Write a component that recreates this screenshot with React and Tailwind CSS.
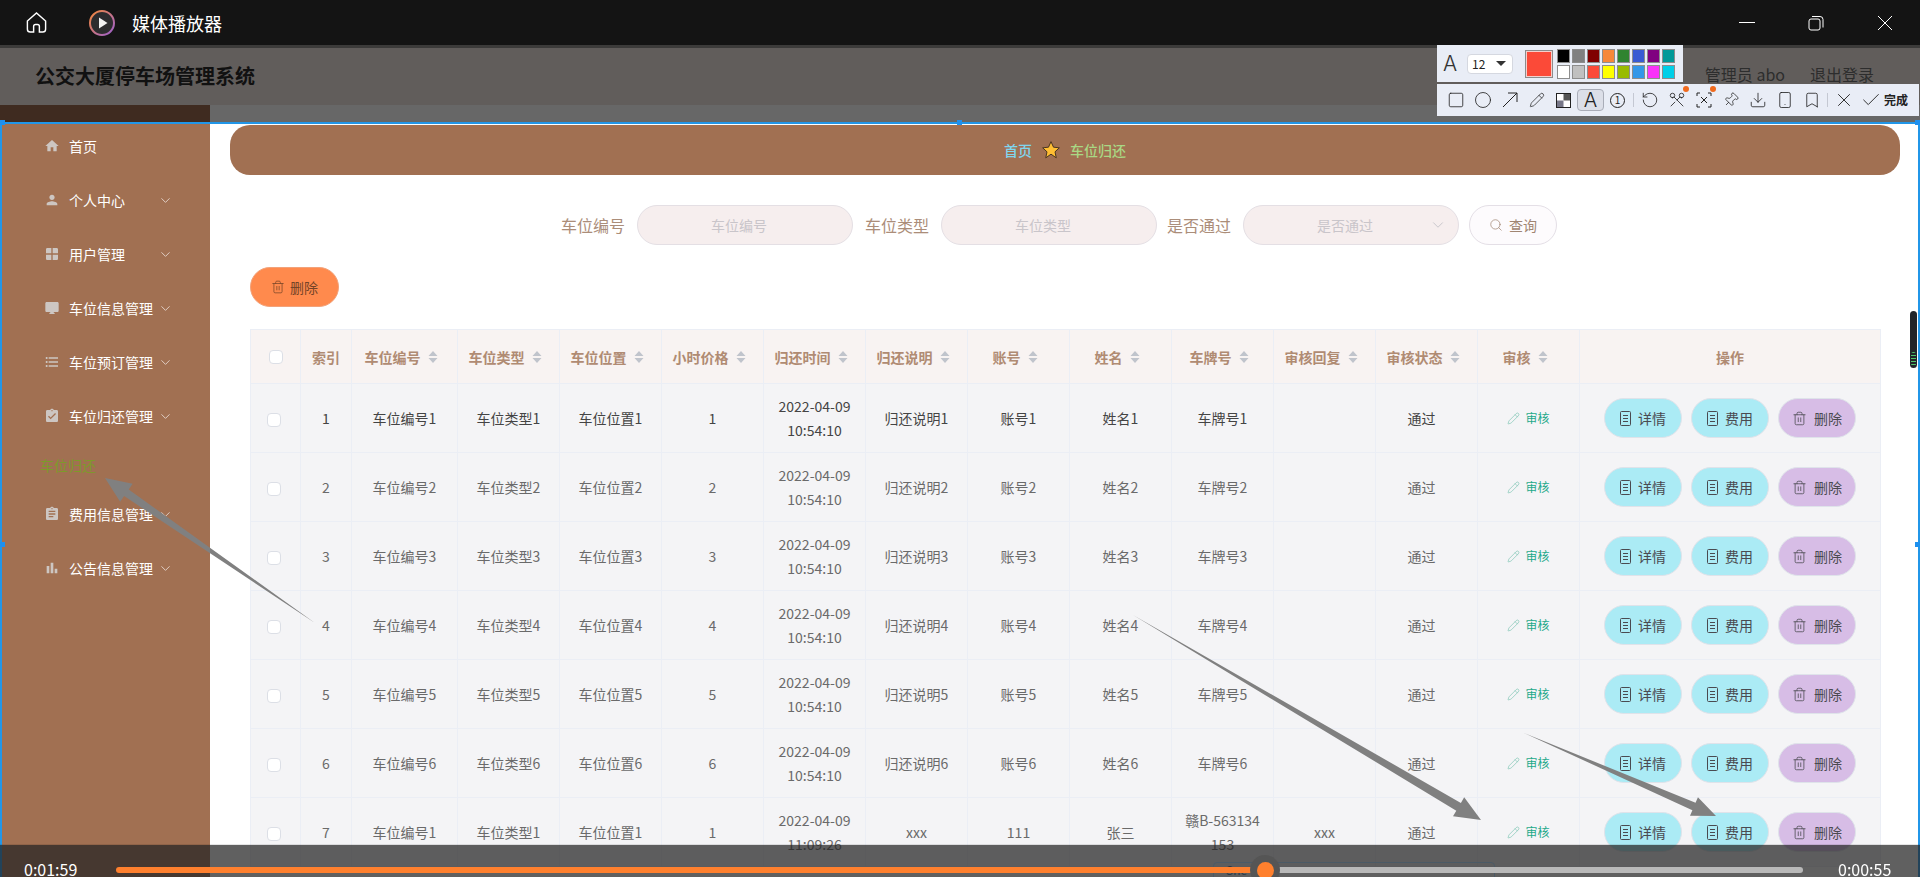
import {
  Bookmark, Check, ChevronDown, Circle, Download, Pencil, Pin, RotateCcw, Scissors,
  Search, Smartphone, Square, Trash2, X,
} from 'lucide-react';
import {
  MdAssignment, MdAssignmentTurnedIn, MdBarChart, MdDesktopMac, MdFormatListBulleted, MdHome, MdPerson, MdWindow,
} from 'react-icons/md';

const menu = [
  { label: '首页', icon: MdHome },
  { label: '个人中心', icon: MdPerson, arrow: true },
  { label: '用户管理', icon: MdWindow, arrow: true },
  { label: '车位信息管理', icon: MdDesktopMac, arrow: true },
  { label: '车位预订管理', icon: MdFormatListBulleted, arrow: true },
  { label: '车位归还管理', icon: MdAssignmentTurnedIn, arrow: true, sub: '车位归还' },
  { label: '费用信息管理', icon: MdAssignment, arrow: true },
  { label: '公告信息管理', icon: MdBarChart, arrow: true },
];

const columns = [
  { w: 50 }, { w: 51, label: '索引' }, { w: 106, label: '车位编号', sort: true }, { w: 102, label: '车位类型', sort: true },
  { w: 102, label: '车位位置', sort: true }, { w: 102, label: '小时价格', sort: true }, { w: 102, label: '归还时间', sort: true },
  { w: 102, label: '归还说明', sort: true }, { w: 102, label: '账号', sort: true }, { w: 102, label: '姓名', sort: true },
  { w: 102, label: '车牌号', sort: true }, { w: 102, label: '审核回复', sort: true }, { w: 102, label: '审核状态', sort: true },
  { w: 102, label: '审核', sort: true }, { w: 301, label: '操作' },
];

const rows = [1, 2, 3, 4, 5, 6].map((n) => ({
  id: n, code: `车位编号${n}`, type: `车位类型${n}`, place: `车位位置${n}`, price: n,
  time: '2022-04-09 10:54:10', note: `归还说明${n}`, account: `账号${n}`, name: `姓名${n}`, plate: `车牌号${n}`, reply: '',
}));
rows.push({
  id: 7, code: '车位编号1', type: '车位类型1', place: '车位位置1', price: 1,
  time: '2022-04-09 11:09:26', note: 'xxx', account: '111', name: '张三', plate: '赣B-563134153', reply: 'xxx',
});

const swatches = [
  '#000000', '#808080', '#800000', '#f7883a', '#308430', '#385ad3', '#800080', '#009999',
  '#ffffff', '#c0c0c0', '#fb4a38', '#ffff00', '#99bb00', '#3397e8', '#f932f9', '#00cfe8',
];

// tapered annotation arrow, point at the tail
function arrowPoints(x1, y1, x2, y2, neck, len, barb) {
  const d = Math.hypot(x2 - x1, y2 - y1);
  const ux = (x2 - x1) / d;
  const uy = (y2 - y1) / d;
  const nx = x2 - ux * len;
  const ny = y2 - uy * len;
  const p = (o) => `${nx - uy * o},${ny + ux * o}`;
  return [`${x1},${y1}`, p(neck), p(barb), `${x2},${y2}`, p(-barb), p(-neck)].join(' ');
}

function SortCaret() {
  return (
    <svg width="10" height="14" viewBox="0 0 10 14" className="ml-[7px] shrink-0">
      <path d="M5 1 9.500 6h-9zM5 13 .5 8h9z" fill="#c0c4cc" />
    </svg>
  );
}

function DocIcon() {
  return (
    <svg width="11" height="15" viewBox="0 0 11 15" fill="none" stroke="currentColor" strokeWidth="1">
      <rect x=".5" y=".5" width="10" height="14" rx="1" />
      <path d="M3 4.500h5M3 7.500h5M3 10.500h5" />
    </svg>
  );
}

function RowButton({ label, icon, color }) {
  return (
    <button className={`flex h-10 w-[78px] items-center justify-center gap-[7px] rounded-full border border-[#dfe3ea] text-sm text-[#4a4a50] ${color}`}>
      {icon}
      {label}
    </button>
  );
}

function ToolIcon({ children, active }) {
  return (
    <div className={`flex h-[22px] w-[27px] items-center justify-center rounded-sm ${active ? 'border border-[#a9adb8] bg-[#dcdfe8]' : ''}`}>
      {children}
    </div>
  );
}

function Dot() {
  return <span className="absolute right-[1px] top-[-3px] h-[6px] w-[6px] rounded-full bg-[#f06a1d]" />;
}

function Sep() {
  return <div className="mx-[2px] h-[14px] w-px bg-[#c4c8d2]" />;
}

function Toolbars() {
  const s = { size: 18, strokeWidth: 1.1, color: '#222' };
  return (
    <>
      <div className="absolute left-[1437px] top-[45px] flex h-[37px] w-[246px] items-center bg-[#e9edf6] pl-[6px]">
        <span className="w-[24px] font-['Inter'] text-[21px] font-light leading-none text-[#333]">A</span>
        <div className="flex h-[20px] w-[46px] items-center justify-between rounded-sm border border-[#d5d8e0] bg-white px-[4px] text-xs text-[#222]">
          12
          <span className="mr-[2px] h-0 w-0 border-x-[5px] border-t-[5px] border-x-transparent border-t-[#333]" />
        </div>
        <div className="ml-[12px] h-[28px] w-[28px] border border-[#8c8c8c] bg-[#fb4a38] outline outline-1 -outline-offset-2 outline-[#f4d0cc]" />
        <div className="ml-[4px] grid grid-cols-8 gap-[2px]">
          {swatches.map((c, i) => (
            <div key={i} className="h-[14px] w-[13px] border border-[#8d8d8d]" style={{ backgroundColor: c }} />
          ))}
        </div>
      </div>

      <div className="absolute left-[1437px] top-[84px] flex h-[32px] w-[482px] items-center bg-[#e9edf6] pl-[5px]">
        <ToolIcon><Square {...s} /></ToolIcon>
        <ToolIcon><Circle {...s} /></ToolIcon>
        <ToolIcon>
          <svg width="16" height="16" viewBox="0 0 16 16" fill="none" stroke="#222"><path d="M1 15 15 1M6 1h9v9" /></svg>
        </ToolIcon>
        <ToolIcon><Pencil size={16} strokeWidth={1.1} color="#222" /></ToolIcon>
        <ToolIcon>
          <svg width="15" height="15" viewBox="0 0 15 15">
            <rect x=".5" y=".5" width="14" height="14" fill="#fff" stroke="#222" />
            <rect x="7.500" y="1" width="6.500" height="6.500" fill="#555" />
            <rect x="1" y="7.500" width="6.500" height="6.500" fill="#778" />
          </svg>
        </ToolIcon>
        <ToolIcon active><span className="font-['Inter'] text-[20px] font-light leading-none text-[#222]">A</span></ToolIcon>
        <ToolIcon>
          <span className="flex h-[15px] w-[15px] items-center justify-center rounded-full border border-[#222] text-[10px] leading-none text-[#222]">1</span>
        </ToolIcon>
        <Sep />
        <ToolIcon><RotateCcw {...s} /></ToolIcon>
        <div className="relative"><ToolIcon><Scissors {...s} className="rotate-90" /></ToolIcon><Dot /></div>
        <div className="relative">
          <ToolIcon>
            <svg width="16" height="16" viewBox="0 0 16 16" fill="none" stroke="#222">
              <path d="M1 4V1h3M12 1h3v3M15 12v3h-3M4 15H1v-3M5 5l6 6M11 5l-6 6" />
            </svg>
          </ToolIcon>
          <Dot />
        </div>
        <ToolIcon><Pin size={16} strokeWidth={1.1} color="#222" className="rotate-45" /></ToolIcon>
        <ToolIcon><Download {...s} /></ToolIcon>
        <ToolIcon><Smartphone {...s} /></ToolIcon>
        <ToolIcon><Bookmark {...s} /></ToolIcon>
        <Sep />
        <ToolIcon><X size={22} strokeWidth={1} color="#222" /></ToolIcon>
        <ToolIcon><Check size={22} strokeWidth={1} color="#222" /></ToolIcon>
        <span className="text-xs font-bold text-[#222]">完成</span>
      </div>
    </>
  );
}

function Annotations() {
  return (
    <svg className="pointer-events-none absolute left-0 top-0" width="1920" height="877">
      <polygon points={arrowPoints(315, 623, 105, 478, 4, 26, 11)} fill="#808080" />
      <polygon points={arrowPoints(1133, 615, 1481, 820, 4.5, 26, 11)} fill="#808080" />
      <polygon points={arrowPoints(1524, 733, 1716, 816, 4, 24, 10)} fill="#808080" />
    </svg>
  );
}

export default function App() {
  return (
    <div className="relative flex h-[877px] w-full flex-col overflow-hidden bg-white font-['Noto_Sans_CJK_SC','Noto_Sans',sans-serif]">
      {/* window title bar */}
      <div className="flex h-[45px] shrink-0 items-center bg-[#141414] pl-[25px] pr-[27px]">
        <svg width="23" height="23" viewBox="0 0 24 24" fill="none" stroke="#fff" strokeWidth="1.5">
          <path d="M2.500 10.500 12 2l9.500 8.500V19a3 3 0 0 1-3 3H15v-6a2 2 0 0 0-2-2h-2a2 2 0 0 0-2 2v6H5.500a3 3 0 0 1-3-3z" />
        </svg>
        <svg width="26" height="26" viewBox="0 0 26 26" className="ml-[41px]">
          <defs>
            <linearGradient id="ring" x1="0" y1="0" x2="1" y2="1">
              <stop offset="0" stopColor="#f5893a" />
              <stop offset="1" stopColor="#9a5fd0" />
            </linearGradient>
          </defs>
          <circle cx="13" cy="13" r="12" fill="#2c2c2e" stroke="url(#ring)" strokeWidth="2" />
          <path d="M10 7.500 18.500 13 10 18.500z" fill="#f2f2f2" />
        </svg>
        <span className="ml-[17px] text-lg text-white">媒体播放器</span>
        <div className="ml-auto flex items-center gap-[53px]">
          <div className="h-px w-4 bg-white" />
          <svg width="16" height="16" viewBox="0 0 16 16" fill="none" stroke="#fff">
            <rect x="1" y="4" width="11" height="11" rx="2" />
            <path d="M4 1.500h8a3 3 0 0 1 3 3v8" />
          </svg>
          <svg width="16" height="16" viewBox="0 0 16 16" stroke="#fff"><path d="M1 1l14 14M15 1 1 15" /></svg>
        </div>
      </div>
      <div className="h-[3px] shrink-0 bg-[#3c3b3a]" />

      {/* dimmed header */}
      <div className="flex h-[57px] shrink-0 items-center bg-[#615d5b] pl-[35px] pr-[46px]">
        <span className="mb-[2px] text-xl font-bold text-[#111]">公交大厦停车场管理系统</span>
        <span className="mb-[6px] ml-auto text-base text-[#2d2d2d]">管理员 abo</span>
        <span className="mb-[6px] ml-[25px] text-base text-[#2d2d2d]">退出登录</span>
      </div>
      <div className="flex h-[17px] shrink-0 shadow-[inset_0_3px_3px_rgba(0,0,0,0.25)]">
        <div className="w-[210px] bg-[#3f2b20]" />
        <div className="flex-1 bg-[#676767]" />
      </div>

      <div className="flex min-h-0 flex-1 pt-[2px]">
        {/* sidebar */}
        <aside className="w-[210px] shrink-0 bg-[#a17052]">
          <nav className="mt-[-5px]">
            {menu.map((m) => (
              <div key={m.label}>
                <div className="flex h-[54px] items-center pl-[44px] text-sm text-white">
                  <m.icon size={16} color="#cdc6c2" className="shrink-0" />
                  <span className="ml-[9px] w-[89px] whitespace-nowrap">{m.label}</span>
                  <span className="w-[15px]">
                    {m.arrow && <ChevronDown size={15} strokeWidth={1.25} color="#f0e6e0" />}
                  </span>
                </div>
                {m.sub && <div className="flex h-[44px] items-center pl-[40px] text-sm text-[#7d9a2a]">{m.sub}</div>}
              </div>
            ))}
          </nav>
        </aside>

        {/* main */}
        <main className="min-w-0 flex-1 pl-[20px] pr-[20px] pt-px">
          <div className="flex h-[50px] items-center justify-center rounded-[20px] bg-[#a17052] text-sm font-medium">
            <span className="text-[#7fd6ee]">首页</span>
            <svg width="20" height="20" viewBox="0 0 24 24" className="mx-[9px]">
              <path d="m12 2 3 6.600 7 .8-5.200 4.800 1.500 7.200L12 17l-6.300 4.400 1.500-7.200L2 9.400l7-.8z" fill="#ffbe33" stroke="#3d2c1e" strokeWidth="1.100" />
            </svg>
            <span className="text-[#a9d884]">车位归还</span>
          </div>

          <div className="mt-[30px] flex h-10 items-center justify-center gap-3 pr-[12px] text-base text-[#ab8d79]">
            <span>车位编号</span>
            <input placeholder="车位编号" className="h-10 w-[216px] rounded-full border border-[#e4dfe4] bg-[#f6eeee] pr-[12px] text-center text-sm outline-none placeholder:text-[#c9c5ca]" />
            <span>车位类型</span>
            <input placeholder="车位类型" className="h-10 w-[216px] rounded-full border border-[#e4dfe4] bg-[#f6eeee] pr-[12px] text-center text-sm outline-none placeholder:text-[#c9c5ca]" />
            <span className="ml-[-2px]">是否通过</span>
            <div className="relative flex h-10 w-[216px] items-center justify-center rounded-full border border-[#e4dfe4] bg-[#f6eeee] pr-[12px] text-sm text-[#c9c5ca]">
              是否通过
              <ChevronDown size={18} strokeWidth={1} color="#b9b9c0" className="absolute right-[11px]" />
            </div>
            <button className="ml-[-2px] flex h-10 w-[88px] items-center justify-center gap-[6px] rounded-full border border-[#e4dfe6] bg-[#fdfbfd] text-sm text-[#a08572]">
              <Search size={14} strokeWidth={1.25} />
              查询
            </button>
          </div>

          <div className="ml-[20px] mt-[22px]">
            <button className="flex h-10 w-[89px] items-center justify-center gap-[5px] rounded-full border border-[#f2a27a] bg-[#ff8a4d] text-sm text-[#744327]">
              <Trash2 size={14} strokeWidth={1.25} />
              删除
            </button>

            <table className="mt-[22px] w-[1630px] table-fixed border-collapse border border-[#ebeef5] text-sm">
              <colgroup>
                {columns.map((c, i) => <col key={i} style={{ width: c.w }} />)}
              </colgroup>
              <thead>
                <tr className="h-[54px] bg-[#f8f3f2]">
                  {columns.map((c, i) => (
                    <th key={i} className={`border border-[#ebeef5] p-0 font-bold text-[#b08b73] ${c.sort ? 'pr-[7px]' : ''}`}>
                      <div className="flex items-center justify-center">
                        {i === 0 && <span className="h-[14px] w-[14px] rounded-sm border border-[#dcdfe6] bg-white" />}
                        {c.label}
                        {c.sort && <SortCaret />}
                      </div>
                    </th>
                  ))}
                </tr>
              </thead>
              <tbody>
                {rows.map((r) => (
                  <tr key={r.id} className={`h-[69px] bg-[#f4f4f6] text-center ${r.id === 1 ? 'text-[#444]' : 'text-[#6a6a6a]'}`}>
                    <td className="border border-[#ebeef5] p-0">
                      <span className="mr-[4px] inline-block h-[14px] w-[14px] rounded-sm border border-[#dcdfe6] bg-white align-middle" />
                    </td>
                    <td className="border border-[#ebeef5] p-0">{r.id}</td>
                    <td className="border border-[#ebeef5] px-[10px] py-0">{r.code}</td>
                    <td className="border border-[#ebeef5] px-[10px] py-0">{r.type}</td>
                    <td className="border border-[#ebeef5] px-[10px] py-0">{r.place}</td>
                    <td className="border border-[#ebeef5] px-[10px] py-0">{r.price}</td>
                    <td className="border border-[#ebeef5] px-[10px] py-0 leading-6">{r.time}</td>
                    <td className="border border-[#ebeef5] px-[10px] py-0">{r.note}</td>
                    <td className="border border-[#ebeef5] px-[10px] py-0">{r.account}</td>
                    <td className="border border-[#ebeef5] px-[10px] py-0">{r.name}</td>
                    <td className="border border-[#ebeef5] px-[10px] py-0 leading-6 break-all">{r.plate}</td>
                    <td className="border border-[#ebeef5] px-[10px] py-0">{r.reply}</td>
                    <td className="border border-[#ebeef5] py-0 pl-[10px] pr-[20px]">通过</td>
                    <td className="border border-[#ebeef5] p-0">
                      <div className="flex items-center justify-center gap-[5px] text-xs text-[#1fa98a]">
                        <Pencil size={13} strokeWidth={1} color="#5fb8a2" />
                        审核
                      </div>
                    </td>
                    <td className="border border-[#ebeef5] p-0">
                      <div className="flex items-center justify-center gap-[9px]">
                        <RowButton label="详情" icon={<DocIcon />} color="bg-[#abebf5]" />
                        <RowButton label="费用" icon={<DocIcon />} color="bg-[#abebf5]" />
                        <RowButton label="删除" icon={<Trash2 size={15} strokeWidth={1.25} />} color="bg-[#d7bde6]" />
                      </div>
                    </td>
                  </tr>
                ))}
              </tbody>
            </table>
          </div>
        </main>
      </div>

      {/* screenshot selection frame */}
      <div className="pointer-events-none absolute inset-x-0 bottom-0 top-[122px] border-x-2 border-t-2 border-[#2196e8]" />
      <div className="absolute left-0 top-[120px] h-[5px] w-[5px] bg-[#1e90ee]" />
      <div className="absolute left-[957px] top-[120px] h-[5px] w-[5px] bg-[#1e90ee]" />
      <div className="absolute right-0 top-[120px] h-[5px] w-[5px] bg-[#1e90ee]" />
      <div className="absolute left-0 top-[542px] h-[5px] w-[5px] bg-[#1e90ee]" />
      <div className="absolute right-0 top-[542px] h-[5px] w-[5px] bg-[#1e90ee]" />

      {/* page scrollbar */}
      <div className="absolute left-[1910px] top-[311px] flex h-[57px] w-[7px] flex-col justify-end rounded-full bg-[#22252a] pb-[2px]">
        <div className="mx-[1px] h-[14px] rounded-sm bg-[repeating-linear-gradient(#4fc36a_0_1px,#22252a_1px_3px)]" />
      </div>

      <Annotations />
      <Toolbars />

      {/* player bar */}
      <div className="absolute inset-x-0 bottom-0 h-[32px] bg-[#222222]/72 pt-[18px] shadow-[0_-1px_0_rgba(0,0,0,0.1)]">
        <div className="absolute left-[1213px] top-[17px] h-[30px] w-[282px] rounded border border-[#4b5a66] pl-[12px] text-xs leading-[13px] text-[#2a3a48]">Sne</div>
        <div className="relative flex h-[14px] items-center pl-[24px] text-base text-white">
          <span className="relative top-[-1px] w-[92px] leading-none">0:01:59</span>
          <div className="relative flex h-[6px] w-[1687px]">
            <div className="w-[1149px] rounded-l-full bg-[#ff802e]" />
            <div className="flex-1 rounded-r-full bg-[#b9b9b9]" />
            <div className="absolute left-[1134px] top-[-12px] flex h-[30px] w-[30px] items-center justify-center rounded-full bg-[#555]">
              <div className="h-[17px] w-[17px] rounded-full bg-[#ff802e]" />
            </div>
          </div>
          <span className="relative top-[-1px] ml-[35px] leading-none blur-[0.5px]">0:00:55</span>
        </div>
      </div>
    </div>
  );
}
